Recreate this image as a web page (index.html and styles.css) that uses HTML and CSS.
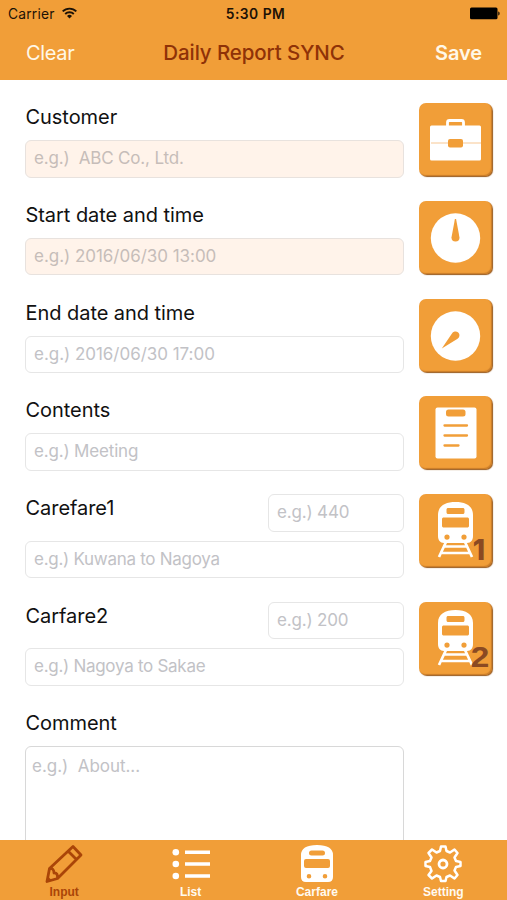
FILE: index.html
```html
<!DOCTYPE html>
<html lang="en">
<head>
<meta charset="utf-8">
<title>Daily Report SYNC</title>
<link rel="stylesheet" href="styles.css">
</head>
<body>
<svg class="defs" aria-hidden="true">
  <symbol id="train" viewBox="0 0 74 74">
    <path fill="#fff" fill-rule="evenodd" d="M19 21c0-9 7-13 17.500-13S54 12 54 21v21c0 4-2 7-6 7H25c-4 0-6-3-6-7zM29.500 14c-1.500 0-2 .5-2 2v2c0 1.500.5 2 2 2h14c1.500 0 2-.5 2-2v-2c0-1.500-.5-2-2-2zM25 23.500c-1.500 0-2 .5-2 2v6c0 1.500.5 2 2 2h23c1.500 0 2-.5 2-2v-6c0-1.500-.5-2-2-2zM28 40.500a2.600 2.600 0 1 0 0 5.200 2.600 2.600 0 0 0 0-5.200zm17 0a2.600 2.600 0 1 0 0 5.200 2.600 2.600 0 0 0 0-5.200z"/>
    <path d="M27 48l-7 15M46 48l7 15M25 52.500h23M23 59h27" fill="none" stroke="#fff" stroke-width="2.700"/>
  </symbol>
</svg>
<div class="app">
  <header class="header">
    <div class="status">
      <div class="carrier"><span>Carrier</span>
        <svg width="15" height="12" viewBox="0 0 15 12" fill="none" stroke="#1c1206" stroke-width="1.900"><path d="M.7 4.400a9.600 9.600 0 0 1 13.600 0M3.200 7a6.100 6.100 0 0 1 8.600 0"/><path d="M7.500 11.500L5 9a3.500 3.500 0 0 1 5 0z" fill="#1c1206" stroke="none"/></svg>
      </div>
      <div class="time">5:30 PM</div>
      <svg class="battery" width="30" height="13" viewBox="0 0 30 13"><rect x="0" y=".5" width="27.500" height="11.800" rx="1.500"/><path d="M28.300 4.400c1.700.4 1.700 3.600 0 4z"/></svg>
    </div>
    <nav class="navbar"><a class="clear">Clear</a><h1>Daily Report SYNC</h1><a class="save">Save</a></nav>
  </header>
  <main class="form">
    <section class="row">
      <div class="field"><label>Customer</label><div class="input required">e.g.)&nbsp; ABC Co., Ltd.</div></div>
      <div class="tile"><svg viewBox="0 0 74 74"><path d="M28.500 23v-3.500q0-2 2-2h12q2 0 2 2V23" fill="none" stroke="#fff" stroke-width="2.800"/><rect x="11" y="22.500" width="51" height="35" rx="1.500" fill="#fff"/><path d="M12 40h50" stroke="#f7c893" stroke-width="1.200"/><rect x="29" y="36" width="15" height="8.500" rx="2" fill="#f19e38"/></svg></div>
    </section>
    <section class="row">
      <div class="field"><label>Start date and time</label><div class="input required date">e.g.) 2016/06/30 13:00</div></div>
      <div class="tile"><svg viewBox="0 0 74 74"><circle cx="36.500" cy="37" r="24.700" fill="#fff"/><path d="M35.900 18h1.200L40.500 36.500a4 4 0 0 1-8 0z" fill="#f19e38"/></svg></div>
    </section>
    <section class="row">
      <div class="field"><label>End date and time</label><div class="input date">e.g.) 2016/06/30 17:00</div></div>
      <div class="tile"><svg viewBox="0 0 74 74"><circle cx="36.500" cy="37" r="24.700" fill="#fff"/><path d="M22.800 49.500L32.800 34.800a4 4 0 1 1 5.400 5.200z" fill="#f19e38"/></svg></div>
    </section>
    <section class="row">
      <div class="field"><label>Contents</label><div class="input">e.g.) Meeting</div></div>
      <div class="tile"><svg viewBox="0 0 74 74"><rect x="16.500" y="11.500" width="41" height="51" rx="2" fill="#fff"/><rect x="27" y="13.500" width="19.500" height="7" rx="2.500" fill="#f19e38"/><path d="M25.500 29.500h22.500M25.500 39.500h22.500M25.500 49.500h14" stroke="#f19e38" stroke-width="2.300" stroke-linecap="round"/></svg></div>
    </section>
    <section class="row fare">
      <div class="field"><div class="fare-head"><label>Carefare1</label><div class="input amount">e.g.) 440</div></div><div class="input tight">e.g.) Kuwana to Nagoya</div></div>
      <div class="tile"><svg viewBox="0 0 74 74"><use href="#train"/></svg><span class="num one">1</span></div>
    </section>
    <section class="row fare">
      <div class="field"><div class="fare-head"><label>Carfare2</label><div class="input amount">e.g.) 200</div></div><div class="input tight">e.g.) Nagoya to Sakae</div></div>
      <div class="tile"><svg viewBox="0 0 74 74"><use href="#train"/></svg><span class="num">2</span></div>
    </section>
    <section class="row">
      <div class="field"><label>Comment</label><div class="input comment">e.g.)&nbsp; About...</div></div>
    </section>
  </main>
  <footer class="tabs">
    <div class="tab active"><svg viewBox="0 0 40 40" fill="none" stroke="currentColor" stroke-width="2.800" stroke-linejoin="round"><path d="M3 37.500l2.500-13L29 2.500l8 8.500-23.500 23.500zM24 7l8.500 8.500M5.500 24.500q4.500-.5 4.500 4.500 4-.5 3.500 5.500"/><path d="M3 37.500l1-5 4 4z" fill="currentColor" stroke="none"/></svg><span>Input</span></div>
    <div class="tab"><svg viewBox="0 0 40 40" fill="#fff"><circle cx="4.800" cy="8.200" r="3.300"/><circle cx="4.800" cy="20" r="3.300"/><circle cx="4.800" cy="32" r="3.300"/><path d="M14 6.400h25V10H14zM14 18.200h25v3.600H14zM14 30.200h25v3.600H14z"/></svg><span>List</span></div>
    <div class="tab"><svg viewBox="0 0 40 40"><path fill="#fff" fill-rule="evenodd" d="M4 11q0-10 16-10t16 10v22q0 5-5 5H9q-5 0-5-5zM14.500 6.500q-2.500 0-2.500 2.500t2.500 2.500h11q2.500 0 2.500-2.500t-2.500-2.500zM9 15q-2 0-2 2v5q0 2 2 2h22q2 0 2-2v-5q0-2-2-2zM12 30a2.300 2.300 0 1 0 0 4.600 2.300 2.300 0 0 0 0-4.600zm16 0a2.300 2.300 0 1 0 0 4.600 2.300 2.300 0 0 0 0-4.600z"/></svg><span>Carfare</span></div>
    <div class="tab"><svg viewBox="0 0 40 40" fill="none" stroke="#fff" stroke-width="2.500" stroke-linejoin="round"><path d="M18 2.500h4.500l1 4.500 3.500 1.500 4.500-3 3 3.500-3 4.500 1.500 3.500 4.500 1v4l-4.500 1-1.500 3.500 3 4.500-3 3.500-4.500-3-3.500 1.500-1 4H18l-1-4-3.500-1.500-4.500 3L5.500 31l3-4L7 23l-4.500-1v-4L7 17l1.500-3.500-3-4.500L9 5.500l4.500 3L17 7z"/><circle cx="20" cy="20" r="4" stroke-width="2.800"/></svg><span>Setting</span></div>
  </footer>
</div>
</body>
</html>
```
FILE: styles.css
```css
* { box-sizing: border-box; }
body { margin: 0; background: #fff; font-family: Inter, "Liberation Sans", sans-serif; }
.defs { display: none; }
.app { height: 900px; display: flex; flex-direction: column; overflow: hidden; }
.header { height: 79.500px; flex: none; background: #f19e38; }
.status { height: 27px; padding: 0 7px 0 8px; display: grid; grid-template-columns: 1fr auto 1fr; align-items: center; color: #1c1206; font-size: 13.800px; letter-spacing: .2px; }
.carrier { display: flex; align-items: center; gap: 7px; }
.carrier svg { margin-top: -2px; }
.time { font-weight: 600; letter-spacing: .5px; padding-left: 3px; }
.battery { justify-self: end; fill: #000; }
.navbar { height: 51px; padding: 0 25px 0 26px; display: grid; grid-template-columns: 1fr auto 1fr; align-items: center; color: #fff8e8; font-size: 20px; }
.clear { letter-spacing: -.35px; }
.navbar h1 { margin: 0; font-size: 20.500px; font-weight: 500; color: #8f3207; letter-spacing: -.1px; }
.save { justify-self: end; font-weight: 600; letter-spacing: -.1px; }
.form { flex: 1; min-height: 0; overflow: hidden; padding: 23.500px 14px 0 25px; display: flex; flex-direction: column; gap: 23.250px; }
.row { flex: none; height: 74.500px; display: grid; grid-template-columns: 378.500px 74px; justify-content: space-between; }
.fare { height: 84.250px; }
label { display: block; height: 37px; line-height: 28px; padding-left: .5px; font-size: 20px; letter-spacing: -.05px; color: #111; }
.input { height: 37.500px; padding: 0 8px; line-height: 35.500px; border: 1px solid #e6e6e6; border-radius: 6px; background: #fff; color: #c2c2c6; font-size: 17px; letter-spacing: -.17px; white-space: nowrap; }
.date { letter-spacing: -.03px; }
.tight { letter-spacing: -.28px; }
.required { background: #fff3ea; border-color: #e8e2de; color: #c6bdb9; }
.fare-head { height: 46.750px; display: flex; justify-content: space-between; }
.amount { width: 135.500px; }
.comment { height: 130px; padding: 2px 6px; border-color: #d8d8d8; letter-spacing: -.03px; }
.tile { position: relative; width: 73px; height: 73px; border-radius: 7px; background: #f19e38; box-shadow: 1px 1px 1px #9a5a1c, inset -1px -1px 1px #c97c28; }
.tile svg { display: block; width: 74px; height: 74px; }
.num { position: absolute; right: 4px; bottom: 3px; font: bold 29px/29px "Liberation Sans", sans-serif; color: #8b4a22; transform: scaleX(1.15); }
.one { right: 7px; bottom: 2px; font: 800 28px/29px Inter, sans-serif; transform: none; }
.tabs { flex: none; height: 60.500px; background: #f19e38; display: grid; grid-template-columns: repeat(4, 126.400px); padding-left: 1px; }
.tab { display: flex; flex-direction: column; align-items: center; padding-top: 4px; color: #fffaf0; font: bold 12px/14px "Liberation Sans", sans-serif; }
.tab svg { width: 40px; height: 40px; margin-bottom: 1px; }
.active { color: #aa4508; }
```
